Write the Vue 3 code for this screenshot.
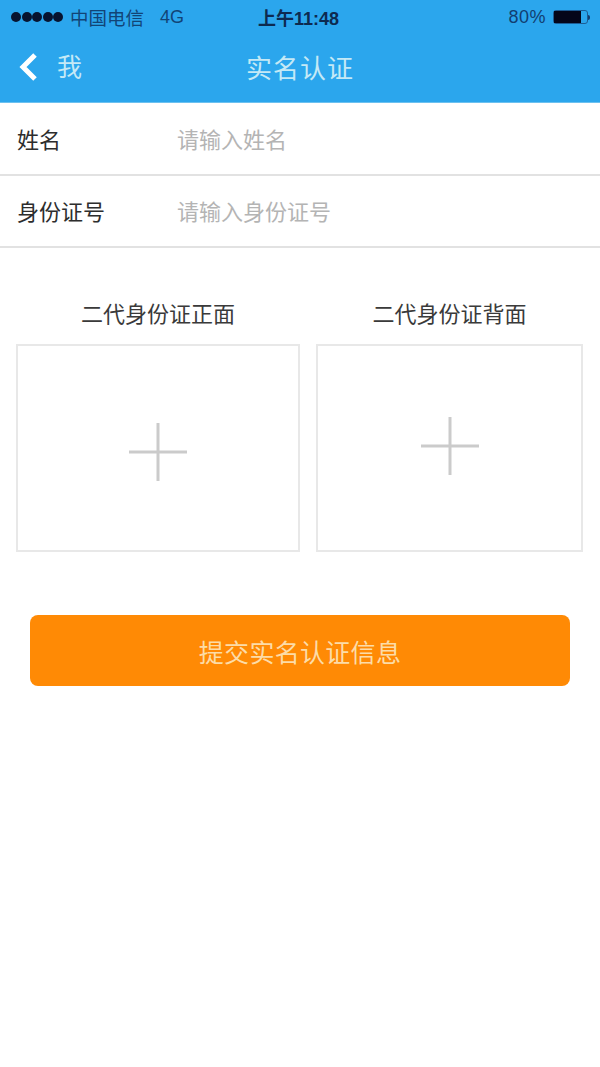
<script setup>
const fields = [
  { label: '姓名', hint: '请输入姓名' },
  { label: '身份证号', hint: '请输入身份证号' }
]

const cards = [
  { title: '二代身份证正面', kind: 'front' },
  { title: '二代身份证背面', kind: 'rear' }
]
</script>

<template>
  <div class="page">
    <header class="header">
      <div class="status-bar">
        <div class="status-left">
          <span class="signal"><i v-for="n in 5" :key="n"></i></span>
          <span class="carrier">中国电信</span>
          <span class="network">4G</span>
        </div>
        <span class="clock">上午11:48</span>
        <div class="status-right">
          <span class="percent">80%</span>
          <span class="battery"><i></i></span>
          <span class="battery-tip"></span>
        </div>
      </div>
      <div class="nav-bar">
        <div class="nav-back">
          <svg class="back-icon" width="20" height="30" viewBox="0 0 20 30">
            <path d="M16 3 L4 15 L16 27" fill="none" stroke="#fff" stroke-width="5" />
          </svg>
          <span>我</span>
        </div>
        <h1 class="title">实名认证</h1>
      </div>
    </header>

    <section class="form">
      <div v-for="field in fields" :key="field.label" class="field">
        <span class="field-label">{{ field.label }}</span>
        <span class="field-hint">{{ field.hint }}</span>
      </div>
    </section>

    <section class="uploads">
      <div v-for="card in cards" :key="card.kind" class="upload" :class="card.kind">
        <div class="upload-title">{{ card.title }}</div>
        <div class="upload-box">
          <svg width="60" height="60" viewBox="0 0 60 60">
            <path d="M30 1 V59 M1 30 H59" stroke="#cbcbcb" stroke-width="3" fill="none" />
          </svg>
        </div>
      </div>
    </section>

    <div class="submit">提交实名认证信息</div>
  </div>
</template>

<style scoped>
.page {
  height: 1067px;
  background: #fff;
  font-family: "Liberation Sans", "Noto Sans CJK SC", sans-serif;
  overflow: hidden;
}

.header {
  height: 102px;
  background: #2ba6ed;
  border-bottom: 1px solid #6cc1f0;
}

.status-bar {
  height: 34px;
  padding: 0 10px 0 11px;
  display: flex;
  align-items: center;
  justify-content: space-between;
  color: #0d3560;
}

.status-left {
  width: 186px;
  display: flex;
  align-items: center;
}

.signal {
  display: flex;
  gap: 0.5px;
  margin-right: 7px;
}

.signal i {
  width: 10px;
  height: 10px;
  border-radius: 50%;
  background: #071430;
}

.carrier {
  font-size: 18.5px;
  color: #124476;
}

.network {
  margin-left: 16px;
  font-size: 18px;
  color: #124476;
}

.clock {
  font-weight: 700;
  color: #0d2a50;
  font-size: 18px;
}

.status-right {
  width: 190px;
  display: flex;
  align-items: center;
  justify-content: flex-end;
}

.percent {
  font-size: 18px;
  letter-spacing: 0.5px;
  margin-right: 7px;
  color: #123e70;
}

.battery {
  width: 35px;
  height: 14px;
  box-sizing: border-box;
  border: 1px solid #1c5d96;
  border-radius: 3px;
  display: block;
}

.battery i {
  display: block;
  width: 27px;
  height: 12px;
  background: #04061a;
}

.battery-tip {
  width: 2px;
  height: 5px;
  background: #123e70;
  border-radius: 0 2px 2px 0;
}

.nav-bar {
  height: 68px;
  box-sizing: border-box;
  padding-bottom: 4px;
  position: relative;
  display: flex;
  align-items: center;
  justify-content: center;
}

.nav-back {
  position: absolute;
  left: 19px;
  top: 15px;
  display: flex;
  align-items: center;
  gap: 18px;
  color: #c4e9f6;
  font-size: 25px;
  line-height: 36px;
}

.back-icon {
  display: block;
}

.title {
  margin: 0;
  color: #c4e9f6;
  font-size: 26px;
  font-weight: 400;
  letter-spacing: 1px;
}

.form {
  padding-top: 1px;
}

.field {
  height: 72px;
  box-sizing: border-box;
  display: flex;
  align-items: center;
  padding: 0 0 2px 17px;
  border-bottom: 2px solid #e2e2e2;
}

.field-label {
  width: 160px;
  font-size: 22px;
  color: #2d2d2d;
}

.field-hint {
  font-size: 22px;
  color: #b4b4b4;
}

.uploads {
  display: flex;
  gap: 16px;
  padding: 52px 17px 0 16px;
}

.upload.front {
  width: 284px;
}

.upload.rear {
  width: 267px;
}

.upload-title {
  text-align: center;
  font-size: 22px;
  line-height: 30px;
  color: #3a3a3a;
}

.upload-box {
  margin-top: 14px;
  height: 208px;
  box-sizing: border-box;
  border: 2px solid #e8e8e8;
  display: flex;
  align-items: center;
  justify-content: center;
}

.front .upload-box svg {
  margin-top: 8px;
}

.rear .upload-box svg {
  margin-bottom: 4px;
}

.submit {
  margin: 63px 30px 0;
  height: 71px;
  line-height: 77px;
  text-align: center;
  background: #ff8a05;
  border-radius: 8px;
  color: #fcdca8;
  font-size: 25px;
  letter-spacing: 0.3px;
}
</style>

<style>
body {
  background: #fff;
}
</style>
